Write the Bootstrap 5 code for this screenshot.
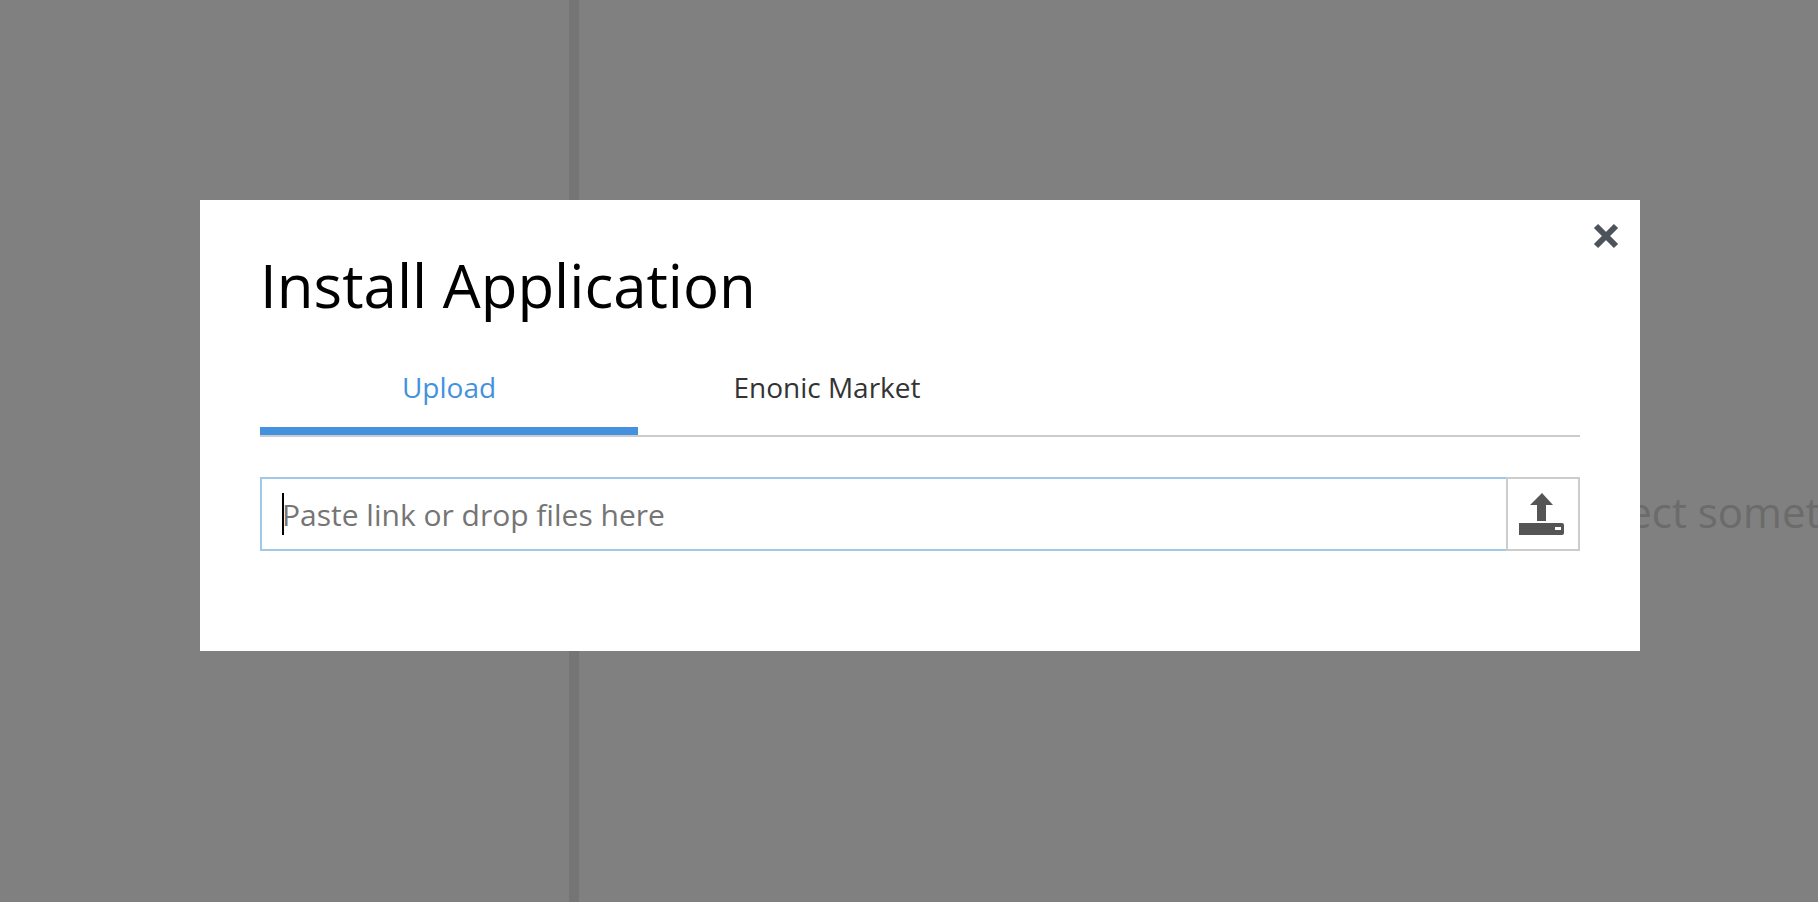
<!DOCTYPE html>
<html lang="en">
<head>
<meta charset="utf-8">
<meta name="viewport" content="width=device-width, initial-scale=1">
<title>Install Application</title>
<link href="https://cdn.jsdelivr.net/npm/bootstrap@5.3.0/dist/css/bootstrap.min.css" rel="stylesheet">
<style>
  body { font-family: "Open Sans", "Noto Sans", sans-serif; background: #808080; }
  .side-panel { flex: 0 0 569px; }
  .splitter { flex: 0 0 10px; background: #757575; }
  .empty-note { padding-left: 992px; font-size: 42px; line-height: 60px; color: #6b6b6b; padding-top: 122px; }
  .install-dialog { max-width: none; margin: 200px 178px 0 200px; }
  .install-body { padding: 45px 60px 100px; }
  .dialog-title { font-size: 60px; line-height: 80px; color: #000; margin-bottom: 31px; }
  .close-button { top: 22px; right: 20px; width: 28px; height: 28px; line-height: 0; color: #4d535a; }
  .tab-strip { border-bottom: 2px solid #ccc; margin-bottom: 40px; }
  .tab-strip .nav-link { width: 378px; height: 79px; padding: 0 0 10px; border: 0; border-bottom: 8px solid transparent; border-radius: 0; background: none; font-size: 28px; line-height: 40px; color: #333; }
  .tab-strip .nav-link.active { color: #4492de; border-bottom-color: #4492de; }
  .link-input { height: 74px; padding: 0 20px; border: 2px solid #a0c8e8; border-radius: 0; font-size: 30px; caret-color: transparent; }
  .link-input, .link-input:focus { box-shadow: none; border-color: #a0c8e8; }
  .link-input::placeholder { color: #757575; opacity: 1; }
  .text-caret { left: 22px; top: 16px; width: 2px; height: 42px; background: #000; }
  .upload-button { width: 74px; height: 74px; padding: 0 2px 0 0; margin-left: -2px; border: 2px solid #ccc; background: #fff; color: #555; line-height: 0; z-index: 6; }
</style>
</head>
<body class="overflow-hidden">
<main class="d-flex vh-100 overflow-hidden">
  <div class="side-panel"></div>
  <div class="splitter"></div>
  <section class="flex-grow-1 d-flex align-items-center overflow-hidden">
    <p class="empty-note text-nowrap mb-0">Select something</p>
  </section>
</main>

<div class="modal d-block" role="dialog" aria-modal="true" aria-labelledby="dialogTitle">
  <div class="modal-dialog install-dialog">
    <div class="modal-content border-0 rounded-0">
      <button type="button" class="close-button btn position-absolute border-0 p-0" aria-label="Close">
        <svg width="28" height="28" viewBox="0 0 28 28" aria-hidden="true"><path d="M4 4 24 24M24 4 4 24" stroke="currentColor" stroke-width="6" fill="none"/></svg>
      </button>
      <div class="install-body">
        <h1 id="dialogTitle" class="dialog-title fw-normal mt-0">Install Application</h1>
        <div class="tab-strip nav" role="tablist">
          <button type="button" class="nav-link active" role="tab" aria-selected="true">Upload</button>
          <button type="button" class="nav-link" role="tab" aria-selected="false">Enonic Market</button>
        </div>
        <div class="d-flex">
          <div class="position-relative flex-grow-1">
            <input type="text" class="link-input form-control" placeholder="Paste link or drop files here" aria-label="Paste link or drop files here">
            <span class="text-caret position-absolute"></span>
          </div>
          <button type="button" class="upload-button position-relative" aria-label="Upload">
            <svg width="48" height="48" viewBox="0 0 48 48" fill="currentColor" aria-hidden="true">
              <path d="M24 3 35 15H28V31H19V15H12Z"/>
              <path fill-rule="evenodd" d="M1 33H44Q46 33 46 35V43Q46 45 44 45H1ZM37 37V40H43V37Z"/>
            </svg>
          </button>
        </div>
      </div>
    </div>
  </div>
</div>
<script src="https://cdn.jsdelivr.net/npm/bootstrap@5.3.0/dist/js/bootstrap.bundle.min.js"></script>
</body>
</html>
